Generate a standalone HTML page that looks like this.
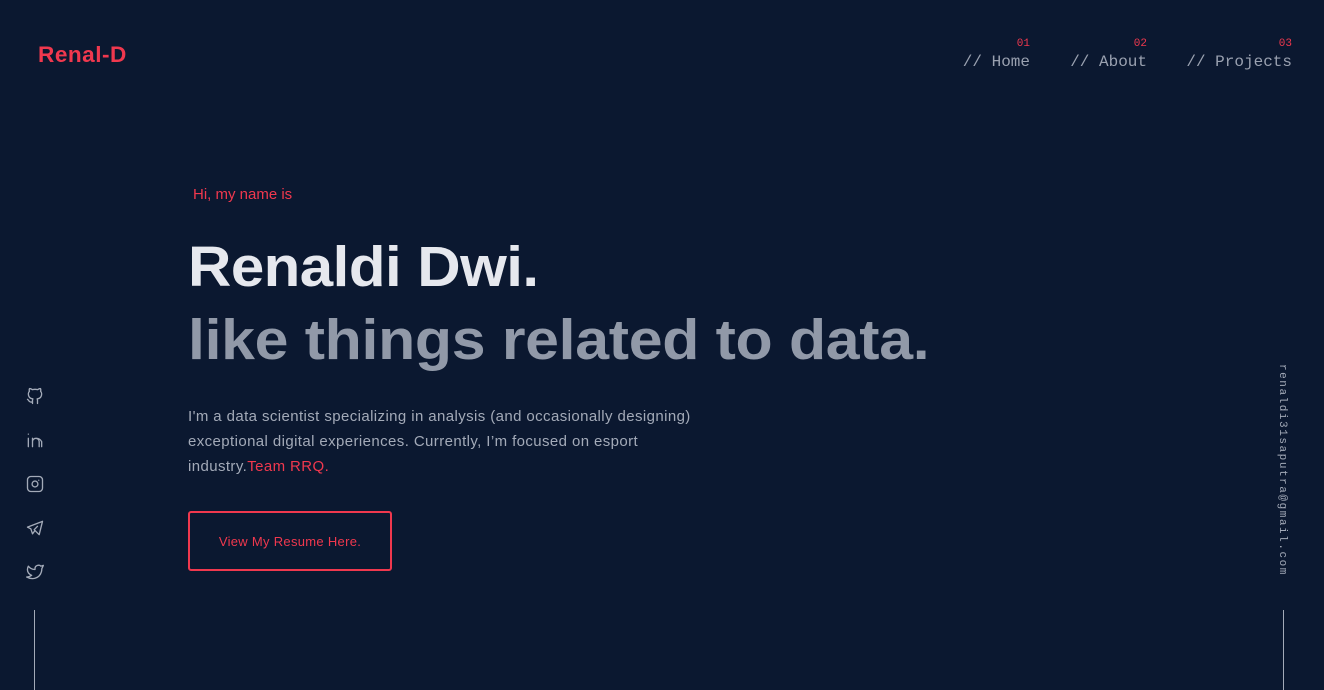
<!DOCTYPE html>
<html><head><meta charset="utf-8"><style>
*{margin:0;padding:0;box-sizing:border-box}
body{width:1324px;height:688px;background:#0b1830;overflow:hidden;position:relative;font-family:"Liberation Sans",sans-serif}
.logo{position:absolute;left:38px;top:42px;color:#f0384e;font-weight:bold;font-size:22.6px;letter-spacing:0.5px}
.nav{position:absolute;top:38px;font-family:"Liberation Mono",monospace;color:#9aa1b0;font-size:16px}
.nav .n{position:absolute;right:0;top:0;font-size:11px;color:#f0384e}
.nav .t{position:absolute;right:0;top:15px;white-space:nowrap}
.hi{position:absolute;left:193px;top:186px;color:#f0384e;font-size:15px}
.h1{position:absolute;left:188px;top:234px;color:#e6e8ee;font-weight:bold;font-size:57px;letter-spacing:-0.5px;transform:scaleX(1.053);transform-origin:left;white-space:nowrap}
.h2{position:absolute;left:188px;top:307px;color:#9199a8;font-weight:bold;font-size:57px;letter-spacing:-0.3px;transform:scaleX(1.067);transform-origin:left;white-space:nowrap}
.p{position:absolute;left:188px;top:404px;width:520px;color:#a3aab8;font-size:15px;line-height:25px;letter-spacing:0.4px}
.p span{color:#f0384e}
.btn{position:absolute;left:188px;top:511px;width:204px;height:60px;border:2px solid #f0384e;border-radius:3px;color:#f0384e;font-size:13px;letter-spacing:0.3px;display:flex;align-items:center;justify-content:center}
.icons{position:absolute;left:25px;top:386px}
.icons svg{display:block;margin-bottom:24px}
.line{position:absolute;top:610px;width:1px;height:80px;background:#a3aab8}
.mail{position:absolute;left:1276px;top:364px;writing-mode:vertical-rl;font-family:"Liberation Mono",monospace;font-size:11px;color:#a3aab8;letter-spacing:1.55px}
</style></head><body>
<div class="logo">Renal-D</div>
<div class="nav" style="left:960px;width:70px"><div class="n">01</div><div class="t">// Home</div></div>
<div class="nav" style="left:1070px;width:77px"><div class="n">02</div><div class="t">// About</div></div>
<div class="nav" style="left:1180px;width:112px"><div class="n">03</div><div class="t">// Projects</div></div>
<div class="hi">Hi, my name is</div>
<div class="h1">Renaldi Dwi.</div>
<div class="h2">like things related to data.</div>
<div class="p">I'm a data scientist specializing in analysis (and occasionally designing) exceptional digital experiences. Currently, I’m focused on esport industry.<span>Team RRQ.</span></div>
<div class="btn">View My Resume Here.</div>
<div class="icons">
<svg width="20" height="20" viewBox="0 0 24 24" fill="none" stroke="#a3aab8" stroke-width="1.6" stroke-linecap="round" stroke-linejoin="round"><path d="M9 19c-4.3 1.4-4.3-2.5-6-3m12 5v-3.5c0-1 .1-1.4-.5-2 2.8-.3 5.5-1.4 5.5-6a4.6 4.6 0 0 0-1.3-3.2 4.2 4.2 0 0 0-.1-3.2s-1.1-.3-3.5 1.3a12.3 12.3 0 0 0-6.2 0C6.5 2.8 5.4 3.1 5.4 3.1a4.2 4.2 0 0 0-.1 3.2A4.6 4.6 0 0 0 4 9.5c0 4.6 2.7 5.7 5.5 6-.6.6-.6 1.2-.5 2V21"/></svg>
<svg width="20" height="20" viewBox="0 0 24 24" fill="none" stroke="#a3aab8" stroke-width="1.6" stroke-linecap="round" stroke-linejoin="round"><path d="M4 10v10M4 5v.01M9 20V10M9 14a4 4 0 0 1 8 0v6M20 20v-6a7 7 0 0 0-7-4"/></svg>
<svg width="20" height="20" viewBox="0 0 24 24" fill="none" stroke="#a3aab8" stroke-width="1.6" stroke-linecap="round" stroke-linejoin="round"><rect x="3" y="3" width="18" height="18" rx="4"/><circle cx="12" cy="12" r="3.5"/><path d="M16.5 7.5v.01"/></svg>
<svg width="20" height="20" viewBox="0 0 24 24" fill="none" stroke="#a3aab8" stroke-width="1.6" stroke-linecap="round" stroke-linejoin="round"><path d="M15 10l-4 4 6 6 4-16-18 7 4 2 2 6 3-4"/></svg>
<svg width="20" height="20" viewBox="0 0 24 24" fill="none" stroke="#a3aab8" stroke-width="1.6" stroke-linecap="round" stroke-linejoin="round"><path d="M22 4.01c-1 .49-1.98.689-3 .99-1.121-1.265-2.783-1.335-4.38-.737S11.977 6.323 12 8v1c-3.245.083-6.135-1.395-8-4 0 0-4.182 7.433 4 11-1.872 1.247-3.739 2.088-6 2 3.308 1.803 6.913 2.423 10.034 1.517 3.580-1.04 6.522-3.723 7.651-7.742a13.84 13.84 0 0 0 .497-3.753C20.18 7.773 21.692 5.250 22 4.009z"/></svg>
</div>
<div class="line" style="left:34px"></div>
<div class="mail">renaldi31saputra@gmail.com</div>
<div class="line" style="left:1283px"></div>
</body></html>
